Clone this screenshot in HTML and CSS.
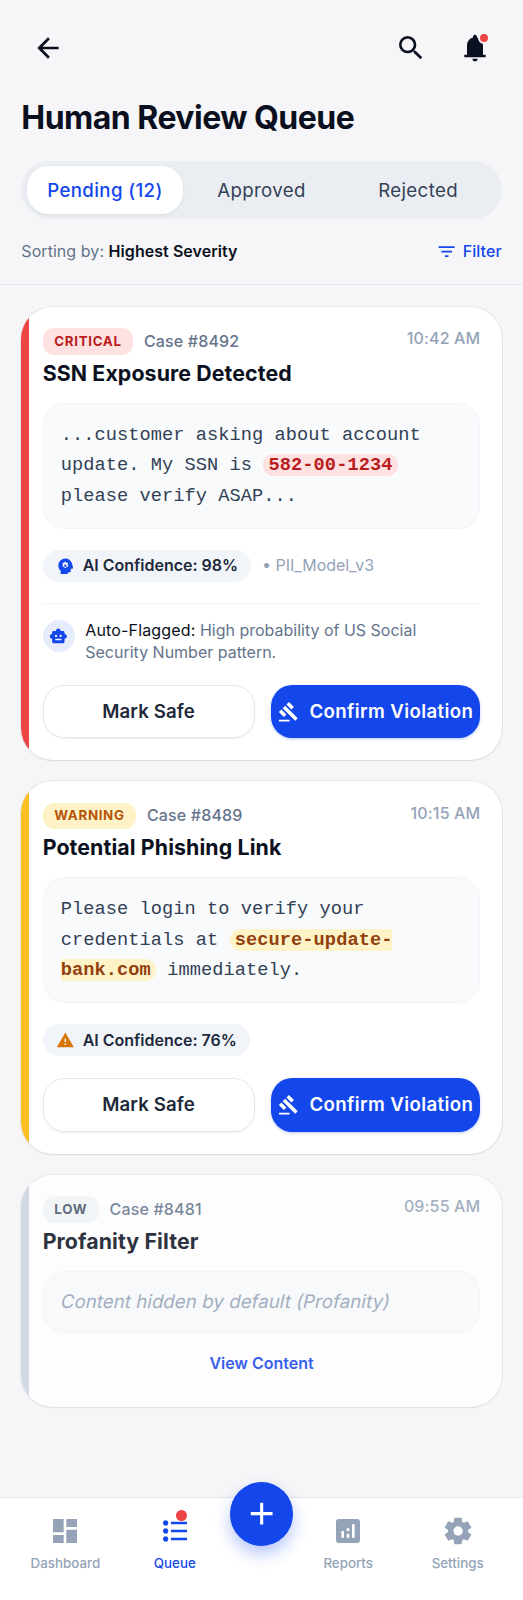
FILE: index.html
```html
<!DOCTYPE html>
<html lang="en">

<head>
  <meta charset="UTF-8">
  <meta name="viewport" content="width=device-width, initial-scale=1.0">
  <title>Human Review Queue</title>
  <link rel="stylesheet" href="styles.css">
</head>

<body>
  <header class="header">
    <div class="top-bar">
      <button class="icon-button" aria-label="Back">
        <svg class="icon" viewBox="0 0 24 24"><path d="M20 11H7.83l5.59-5.59L12 4l-8 8 8 8 1.41-1.41L7.83 13H20v-2z" /></svg>
      </button>
      <div class="top-actions">
        <button class="icon-button" aria-label="Search">
          <svg class="icon" viewBox="0 0 24 24"><path d="M15.5 14h-.79l-.28-.27A6.471 6.471 0 0 0 16 9.5 6.5 6.5 0 1 0 9.5 16c1.61 0 3.09-.59 4.23-1.57l.27.28v.79l5 4.99L20.49 19l-4.99-5zm-6 0C7.01 14 5 11.99 5 9.5S7.01 5 9.5 5 14 7.01 14 9.5 11.99 14 9.5 14z" /></svg>
        </button>
        <button class="icon-button" aria-label="Notifications">
          <svg class="icon" viewBox="0 0 24 24"><path d="M4 19v-2h2v-7c0-1.38.42-2.61 1.25-3.69S9.17 4.53 10.5 4.2v-.7C10.5 2.67 11.17 2 12 2s1.5.67 1.5 1.5v.7c1.33.33 2.42 1.03 3.25 2.11S18 8.62 18 10v7h2v2H4zm8 3c-1.1 0-2-.9-2-2h4c0 1.1-.9 2-2 2z" /></svg>
          <span class="bell-dot"></span>
        </button>
      </div>
    </div>

    <h1 class="title">Human Review Queue</h1>

    <nav class="tabs">
      <button class="tab active">Pending (12)</button>
      <button class="tab">Approved</button>
      <button class="tab">Rejected</button>
    </nav>

    <div class="sort-row">
      <p>Sorting by: <strong>Highest Severity</strong></p>
      <button class="filter">
        <svg class="icon" viewBox="0 0 24 24"><path d="M10 18h4v-2h-4v2zM3 6v2h18V6H3zm3 7h12v-2H6v2z" /></svg>
        Filter
      </button>
    </div>
  </header>

  <main class="queue">
    <article class="card critical">
      <div class="card-head">
        <div class="case">
          <span class="tag">CRITICAL</span>
          <span class="case-id">Case #8492</span>
        </div>
        <time class="time">10:42 AM</time>
      </div>
      <h2 class="card-title">SSN Exposure Detected</h2>

      <p class="snippet">...customer asking about account update. My SSN is <mark>582-00-1234</mark> please verify ASAP...</p>

      <div class="meta">
        <span class="pill">
          <svg class="icon" viewBox="0 -960 960 960"><path fill-rule="evenodd" d="M240-80v-172q-57-52-88.500-121.500T120-520q0-150 105-255t255-105q125 0 221.500 73.500T827-615l52 205q5 19-7 34.500T840-360h-80v120q0 33-23.500 56.500T680-160h-80v80H240ZM440-400h80l6-50q8-3 14.500-7t11.500-9l46 20 40-68-40-30q2-8 2-16t-2-16l40-30-40-68-46 20q-5-5-11.500-9t-14.500-7l-6-50h-80l-6 50q-8 3-14.500 7t-11.500 9l-46-20-40 68 40 30q-2 8-2 16t2 16l-40 30 40 68 46-20q5 5 11.500 9t14.500 7l6 50Zm40-60q-25 0-42.500-17.500T420-520q0-25 17.500-42.500T480-580q25 0 42.500 17.500T540-520q0 25-17.500 42.500T480-460Z" /></svg>
          AI Confidence: 98%
        </span>
        <span class="model">• PII_Model_v3</span>
      </div>

      <div class="reason">
        <span class="bot">
          <svg class="icon" viewBox="0 0 24 24"><path d="M20 9V7c0-1.1-.9-2-2-2h-3c0-1.66-1.34-3-3-3S9 3.34 9 5H6c-1.1 0-2 .9-2 2v2c-1.66 0-3 1.34-3 3s1.34 3 3 3v4c0 1.1.9 2 2 2h12c1.1 0 2-.9 2-2v-4c1.66 0 3-1.34 3-3s-1.34-3-3-3zM7.5 11.5c0-.83.67-1.5 1.5-1.5s1.5.67 1.5 1.5S9.83 13 9 13s-1.5-.67-1.5-1.5zM16 17H8v-2h8v2zm-1-4c-.83 0-1.5-.67-1.5-1.5S14.17 10 15 10s1.5.67 1.5 1.5S15.83 13 15 13z" /></svg>
        </span>
        <p><b>Auto-Flagged:</b> High probability of US Social Security Number pattern.</p>
      </div>

      <div class="actions">
        <button class="button">Mark Safe</button>
        <button class="button primary">
          <svg class="icon" viewBox="0 0 24 24"><path d="M1 21h12v2H1v-2zM5.245 8.07l2.83-2.827 14.14 14.142-2.828 2.828L5.245 8.07zM12.317 1l5.657 5.656-2.83 2.83-5.654-5.66L12.317 1zM3.825 9.485l5.657 5.657-2.828 2.828-5.657-5.657 2.828-2.828z" /></svg>
          Confirm Violation
        </button>
      </div>
    </article>

    <article class="card warning">
      <div class="card-head">
        <div class="case">
          <span class="tag">WARNING</span>
          <span class="case-id">Case #8489</span>
        </div>
        <time class="time">10:15 AM</time>
      </div>
      <h2 class="card-title">Potential Phishing Link</h2>

      <p class="snippet">Please login to verify your credentials at <mark>secure-update-bank.com</mark> immediately.</p>

      <div class="meta">
        <span class="pill">
          <svg class="icon" viewBox="0 0 24 24"><path d="M1 21h22L12 2 1 21zm12-3h-2v-2h2v2zm0-4h-2v-4h2v4z" /></svg>
          AI Confidence: 76%
        </span>
      </div>

      <div class="actions">
        <button class="button">Mark Safe</button>
        <button class="button primary">
          <svg class="icon" viewBox="0 0 24 24"><path d="M1 21h12v2H1v-2zM5.245 8.07l2.83-2.827 14.14 14.142-2.828 2.828L5.245 8.07zM12.317 1l5.657 5.656-2.83 2.83-5.654-5.66L12.317 1zM3.825 9.485l5.657 5.657-2.828 2.828-5.657-5.657 2.828-2.828z" /></svg>
          Confirm Violation
        </button>
      </div>
    </article>

    <article class="card low">
      <div class="card-head">
        <div class="case">
          <span class="tag">LOW</span>
          <span class="case-id">Case #8481</span>
        </div>
        <time class="time">09:55 AM</time>
      </div>
      <h2 class="card-title">Profanity Filter</h2>

      <p class="snippet hidden-content"><span class="slanted">Content hidden by default (Profanity)</span></p>

      <button class="view-content">View Content</button>
    </article>
  </main>

  <nav class="bottom-nav">
    <a class="nav-item">
      <svg class="icon" viewBox="0 0 24 24"><path d="M3 13h8V3H3v10zm0 8h8v-6H3v6zm10 0h8V11h-8v10zm0-18v6h8V3h-8z" /></svg>
      Dashboard
    </a>
    <a class="nav-item active">
      <svg class="icon" viewBox="-1 0 24 24"><path d="M4 10c-1.1 0-2 .9-2 2s.9 2 2 2 2-.9 2-2-.9-2-2-2zm0-6c-1.1 0-2 .9-2 2s.9 2 2 2 2-.9 2-2-.9-2-2-2zm0 12c-1.1 0-2 .9-2 2s.9 2 2 2 2-.9 2-2-.9-2-2-2zM8 19h12v-2H8v2zm0-6h12v-2H8v2zm0-8v2h12V5H8z" /></svg>
      Queue
      <span class="nav-dot"></span>
    </a>
    <button class="fab" aria-label="Add">
      <svg class="icon" viewBox="0 0 24 24"><path d="M19 13h-6v6h-2v-6H5v-2h6V5h2v6h6v2z" /></svg>
    </button>
    <a class="nav-item">
      <svg class="icon" viewBox="0 0 24 24"><path d="M19 3H5c-1.1 0-2 .9-2 2v14c0 1.1.9 2 2 2h14c1.1 0 2-.9 2-2V5c0-1.1-.9-2-2-2zM9 17H7v-5h2v5zm4 0h-2v-3h2v3zm0-5h-2v-2h2v2zm4 5h-2V7h2v10z" /></svg>
      Reports
    </a>
    <a class="nav-item">
      <svg class="icon" viewBox="0 0 24 24"><path d="M9.25 22l-.4-3.2c-.22-.08-.42-.18-.61-.3s-.38-.25-.56-.38L4.7 19.37l-2.75-4.75 2.58-1.95c-.02-.12-.03-.23-.03-.34v-.67c0-.11.01-.22.03-.34L1.95 9.37 4.7 4.62l2.98 1.25c.18-.13.37-.26.57-.38s.4-.22.6-.3L9.25 2h5.5l.4 3.2c.22.08.42.18.61.3s.38.25.56.38l2.98-1.25 2.75 4.75-2.58 1.95c.02.12.03.23.03.34v.67c0 .11-.02.22-.05.34l2.58 1.95-2.75 4.75-2.95-1.25c-.18.13-.37.26-.57.38s-.4.22-.6.3l-.4 3.2h-5.5zm2.8-6.5c.97 0 1.79-.34 2.48-1.03s1.03-1.51 1.03-2.48-.34-1.79-1.03-2.48-1.51-1.03-2.48-1.03c-.98 0-1.81.34-2.49 1.03s-1.01 1.51-1.01 2.48.34 1.79 1.01 2.48 1.51 1.03 2.49 1.03z" /></svg>
      Settings
    </a>
  </nav>
</body>

</html>
```
FILE: styles.css
```css
*,
*::before,
*::after {
  box-sizing: border-box;
}

html {
  font-size: 21.3333px;
}

body {
  --primary: #1347eb;
  font-family: Inter, 'Liberation Sans', sans-serif;
  font-size: .75rem;
  line-height: 1rem;
  background: #f6f6f8;
  color: #0b1020;
  margin: 0;
  height: 1600px;
  display: flex;
  flex-direction: column;
}

h1,
h2,
p {
  margin: 0;
}

button {
  background: none;
  border: 0;
  padding: 0;
  color: inherit;
  font: inherit;
  letter-spacing: inherit;
  cursor: pointer;
}

.icon {
  display: block;
  flex-shrink: 0;
  width: 1.5rem;
  height: 1.5rem;
  fill: currentColor;
}

.header {
  padding: 1rem 1rem 22px;
  border-bottom: 1px solid #e2e8f0;
}

.top-bar,
.top-actions {
  display: flex;
  justify-content: space-between;
  gap: .5rem;
}

.icon-button {
  position: relative;
  width: 2.5rem;
  height: 2.5rem;
  display: grid;
  place-content: center;
}

.bell-dot {
  position: absolute;
  top: 11px;
  right: 12px;
  width: 12px;
  height: 12px;
  border: 2px solid #f6f6f8;
  border-radius: 50%;
  background: #ef4444;
}

.title {
  font-size: 1.5rem;
  font-weight: 700;
  line-height: 40px;
  letter-spacing: -.016em;
  margin-top: 23px;
}

.tabs {
  display: flex;
  margin-top: 23px;
  padding: .25rem;
  border-radius: 2rem;
  background: #eaeef3;
}

.tab {
  flex: 1;
  height: 2.25rem;
  padding-top: 2px;
  border-radius: 1rem;
  font-size: .875rem;
  font-weight: 400;
  letter-spacing: .02em;
  color: #334155;

  &.active {
    background: #fff;
    color: var(--primary);
    font-weight: 500;
    box-shadow: 0 1px 3px rgba(15, 23, 42, .08);
  }
}

.sort-row {
  display: flex;
  justify-content: space-between;
  margin-top: 1rem;
  color: #64748b;
  letter-spacing: .004em;

  strong {
    font-weight: 600;
    color: #0b1020;
  }
}

.filter {
  display: flex;
  align-items: center;
  gap: .25rem;
  height: 1rem;
  color: var(--primary);
  font-weight: 500;

  .icon {
    width: 1rem;
    height: 1rem;
  }
}

.queue {
  flex: 1;
  display: flex;
  flex-direction: column;
  gap: 1rem;
  padding: 22px 1rem 1rem;
}

.card {
  position: relative;
  overflow: hidden;
  padding: 1rem 1rem 22px;
  border-radius: 1.5rem;
  background: #fff;
  box-shadow: 0 0 0 1px rgba(15, 23, 42, .06), 0 1px 2px rgba(15, 23, 42, .06);

  /* severity stripe */
  &::before {
    content: '';
    position: absolute;
    inset: 0 auto 0 0;
    width: 8px;
    background: var(--stripe);
  }
}

.critical {
  --stripe: #ef4444;
  --tag-bg: #fee2e2;
  --tag-color: #b91c1c;
  --mark-color: #b91c1c;
}

.warning {
  --stripe: #fbbf24;
  --tag-bg: #fef3c7;
  --tag-color: #b45309;
  --mark-color: #92400e;
}

.low {
  --stripe: #cbd5e1;
  --tag-bg: #f1f5f9;
  --tag-color: #475569;
  opacity: .85;
}

.card-head {
  display: flex;
  justify-content: space-between;
}

.case {
  display: flex;
  align-items: center;
  gap: .5rem;
}

.tag {
  padding: .125rem .5rem;
  border: 1px solid var(--tag-bg);
  border-radius: .5rem;
  background: var(--tag-bg);
  color: var(--tag-color);
  font-size: .625rem;
  font-weight: 700;
  line-height: 19px;
  letter-spacing: .05em;
}

.case-id {
  color: #64748b;
  font-weight: 500;
  letter-spacing: .01em;
}

.time {
  color: #94a3b8;
  font-weight: 500;
  letter-spacing: .01em;
}

.card-title {
  margin-top: .25rem;
  font-size: 1rem;
  font-weight: 700;
  line-height: 1.25;
  letter-spacing: .005em;
}

.snippet {
  margin-top: .75rem;
  padding: .75rem 17px;
  border: 1px solid #f1f5f9;
  border-radius: 1rem;
  background: #f8fafc;
  color: #334155;
  font-family: 'Liberation Mono', monospace;
  font-size: .875rem;
  line-height: 30.67px;
  letter-spacing: .06px;

  mark {
    padding: 0 .25rem;
    border-radius: .5rem;
    background: var(--tag-bg);
    color: var(--mark-color);
    font-weight: 700;
  }
}

.hidden-content {
  color: #94a3b8;
  font-family: Inter, 'Liberation Sans', sans-serif;
  line-height: 28px;
}

/* slants the upright letterforms */
.slanted {
  display: inline-block;
  transform: skewX(-12deg);
}

.meta {
  display: flex;
  align-items: center;
  gap: .5rem;
  margin-top: 1rem;
}

.pill {
  display: flex;
  align-items: center;
  gap: .375rem;
  padding: .25rem .625rem;
  border-radius: 1rem;
  background: #f1f5f9;
  color: #1e293b;
  font-weight: 600;

  .icon {
    width: .875rem;
    height: .875rem;
    color: var(--primary);
  }
}

.warning .pill .icon {
  color: #d97706;
}

.model {
  color: #94a3b8;
}

.reason {
  display: flex;
  gap: .5rem;
  margin-top: 1rem;
  padding-top: .75rem;
  border-top: 1px solid #f1f5f9;
  color: #64748b;

  b {
    color: #0b1020;
    font-weight: 400;
    letter-spacing: .01em;
  }
}

.bot {
  flex-shrink: 0;
  width: 1.5rem;
  height: 1.5rem;
  border-radius: 50%;
  display: grid;
  place-content: center;
  background: #e7ecfd;
  color: var(--primary);

  .icon {
    width: .875rem;
    height: .875rem;
  }
}

.actions {
  display: flex;
  gap: .75rem;
  margin-top: 22px;
}

.button {
  flex: 1;
  height: 2.5rem;
  display: flex;
  align-items: center;
  justify-content: center;
  gap: .5rem;
  border: 1px solid #e2e8f0;
  border-radius: 1rem;
  background: #fff;
  color: #1e293b;
  font-size: .875rem;
  font-weight: 600;
  letter-spacing: .007em;
  white-space: nowrap;
  box-shadow: 0 1px 2px rgba(15, 23, 42, .06);

  &.primary {
    border: 0;
    background: var(--primary);
    color: #fff;
    letter-spacing: .02em;
    box-shadow: 0 1px 3px rgba(19, 71, 235, .3);
  }

  .icon {
    width: 1rem;
    height: 1rem;
  }
}

.view-content {
  display: block;
  width: 100%;
  margin-top: 9.5px;
  padding: .5rem 0;
  color: var(--primary);
  font-weight: 600;
}

.bottom-nav {
  display: flex;
  height: 103px;
  padding: 0 .5rem;
  border-top: 1px solid #e2e8f0;
  background: #fff;
}

.nav-item {
  position: relative;
  flex: 1;
  display: flex;
  flex-direction: column;
  align-items: center;
  gap: 7px;
  padding-top: 17px;
  color: #94a3b8;
  font-size: .625rem;
  font-weight: 500;
  line-height: 1.5;

  &.active {
    color: var(--primary);
  }
}

.nav-dot {
  position: absolute;
  top: 12px;
  left: calc(50% + 1px);
  width: 11px;
  height: 11px;
  border-radius: 50%;
  background: #ef4444;
}

.fab {
  width: 3rem;
  height: 3rem;
  margin-top: -16px;
  border-radius: 50%;
  display: grid;
  place-content: center;
  background: var(--primary);
  color: #fff;
  box-shadow: 0 8px 16px rgba(19, 71, 235, .3);

  .icon {
    width: 1.75rem;
    height: 1.75rem;
  }
}
```
